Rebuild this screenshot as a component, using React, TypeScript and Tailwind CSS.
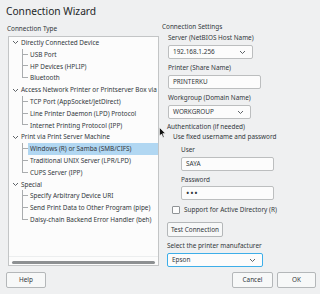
import React from 'react';

const font = { fontFamily: '"Noto Sans", "DejaVu Sans", sans-serif' };

type Group = { label: string; children: string[] };

const groups: Group[] = [
    { label: 'Directly Connected Device', children: ['USB Port', 'HP Devices (HPLIP)', 'Bluetooth'] },
    {
        label: 'Access Network Printer or Printserver Box via',
        children: ['TCP Port (AppSocket/JetDirect)', 'Line Printer Daemon (LPD) Protocol', 'Internet Printing Protocol (IPP)'],
    },
    {
        label: 'Print via Print Server Machine',
        children: ['Windows (R) or Samba (SMB/CIFS)', 'Traditional UNIX Server (LPR/LPD)', 'CUPS Server (IPP)'],
    },
    {
        label: 'Special',
        children: ['Specify Arbitrary Device URI', 'Send Print Data to Other Program (pipe)', 'Daisy-chain Backend Error Handler (beh)'],
    },
];

const Chevron = () => (
    <svg width="7" height="5" viewBox="0 0 7 5" className="shrink-0">
        <polyline points="1,1 3.5,3.5 6,1" fill="none" stroke="#4d5257" strokeWidth="0.9" />
    </svg>
);

const Combo: React.FC<{ value: string; className: string }> = ({ value, className }) => (
    <div className={`flex items-center justify-between bg-[#fcfcfc] border rounded-[2px] pl-[4px] pr-[6px] text-[6.4px] ${className}`}>
        <span>{value}</span>
        <Chevron />
    </div>
);

const Input: React.FC<{ value: string; className: string }> = ({ value, className }) => (
    <div className={`flex items-center bg-[#fcfcfc] border border-[#bcbebf] rounded-[2px] pl-[4px] text-[6.4px] ${className}`}>
        {value}
    </div>
);

const Button: React.FC<{ label: string; className: string }> = ({ label, className }) => (
    <div className={`flex items-center justify-center whitespace-nowrap bg-[#f7f8f8] border border-[#b4b7b9] rounded-[2px] text-[6.4px] ${className}`}>
        {label}
    </div>
);

export default function App() {
    return (
        <div style={font} className="relative w-[320px] h-[294px] bg-[#eff0f1] text-[#31363b] overflow-hidden">
            {/* Title */}
            <div className="pl-[6px] pt-[5px] h-[20px] text-[10.2px] leading-[13px] text-[#232627]">Connection Wizard</div>

            <div className="flex">
                {/* Left column: connection type tree */}
                <div className="w-[152px] ml-[7px] flex flex-col">
                    <div className="mt-[4px] h-[10px] leading-[10px] text-[6.4px]">Connection Type</div>
                    <div className="mt-[2px] ml-[1px] h-[230px] bg-[#fcfcfc] border border-[#c3c5c6] flex flex-col">
                        <div>
                            {groups.map((g) => (
                                <div key={g.label}>
                                    <div className="h-[11.8px] flex items-center text-[6.4px] whitespace-nowrap">
                                        <div className="w-[12px] pl-[3px] flex items-center">
                                            <Chevron />
                                        </div>
                                        <span>{g.label}</span>
                                    </div>
                                    {g.children.map((c, i) => {
                                        const last = i === g.children.length - 1;
                                        const selected = c.startsWith('Windows');
                                        return (
                                            <div key={c} className="h-[11.8px] flex text-[6.4px] whitespace-nowrap">
                                                <div className="ml-[13px] w-[6px] flex flex-col shrink-0">
                                                    <div className="h-1/2 border-l border-b border-[#a9acae]" />
                                                    <div className={`h-1/2 ${last ? '' : 'border-l border-[#a9acae]'}`} />
                                                </div>
                                                <div className={`flex-1 flex items-center pl-[2px] ${selected ? 'bg-[#b1d7f2]' : ''}`}>
                                                    {c}
                                                </div>
                                            </div>
                                        );
                                    })}
                                </div>
                            ))}
                        </div>
                        <div className="flex-1" />
                        <div className="border-t border-[#eceeef] h-[9px] flex items-start pt-[4px] px-[3px]">
                            <div className="h-[2.5px] w-full bg-[#8d9092] rounded-full" />
                        </div>
                    </div>
                </div>

                {/* Right column: connection settings */}
                <div className="ml-[3px] flex-1 flex flex-col text-[6.4px]">
                    <div className="mt-[2px] h-[10px] leading-[10px]">Connection Settings</div>
                    <div className="pl-[6px] flex flex-col">
                        <div className="mt-[1px] h-[10px] leading-[10px]">Server (NetBIOS Host Name)</div>
                        <Combo value="192.168.1.256" className="mt-[2px] w-[85px] h-[14px] border-[#bcbebf]" />
                        <div className="mt-[4px] h-[10px] leading-[10px]">Printer (Share Name)</div>
                        <Input value="PRINTERKU" className="mt-[2px] w-[93px] h-[14px]" />
                        <div className="mt-[4px] h-[10px] leading-[10px]">Workgroup (Domain Name)</div>
                        <Combo value="WORKGROUP" className="mt-[2px] w-[83px] h-[14px] border-[#bcbebf]" />
                    </div>
                    <div className="pl-[5px] flex flex-col">
                        <div className="mt-[3px] h-[10px] leading-[10px]">Authentication (if needed)</div>
                        <div className="pl-[6px] h-[10px] leading-[10px]">Use fixed username and password</div>
                        <div className="pl-[14px] flex flex-col">
                            <div className="mt-[3px] h-[10px] leading-[10px]">User</div>
                            <Input value="SAYA" className="mt-[2px] w-[93px] h-[14px]" />
                            <div className="mt-[4px] h-[10px] leading-[10px]">Password</div>
                            <Input value="•••" className="mt-[1px] w-[93px] h-[14px] text-[9px] tracking-[0.8px]" />
                        </div>
                        <div className="mt-[5px] h-[10px] pl-[5px] flex items-center gap-[4px]">
                            <div className="w-[8px] h-[8px] bg-[#fcfcfc] border border-[#8f9396] rounded-[1px]" />
                            <span>Support for Active Directory (R)</span>
                        </div>
                        <Button label="Test Connection" className="mt-[7px] w-[56px] h-[15px]" />
                        <div className="mt-[4px] h-[10px] leading-[10px]">Select the printer manufacturer</div>
                        <Combo value="Epson" className="mt-[2px] w-[96px] h-[14px] border-[#3daee9]" />
                    </div>
                </div>
            </div>

            {/* Bottom buttons */}
            <div className="mt-[5px] flex items-center pl-[6px] pr-[4px]">
                <Button label="Help" className="w-[40px] h-[16px]" />
                <div className="flex-1" />
                <Button label="Cancel" className="w-[41px] h-[16px]" />
                <Button label="OK" className="ml-[4px] w-[39px] h-[16px]" />
            </div>

            {/* Mouse pointer */}
            <svg className="absolute left-[159px] top-[127px]" width="7" height="11" viewBox="0 0 7 11">
                <path d="M0.5 0.5 L0.5 9 L2.5 7 L4 10.5 L5.2 10 L3.8 6.6 L6.5 6.6 Z" fill="#111" stroke="#fff" strokeWidth="0.6" />
            </svg>
        </div>
    );
}
